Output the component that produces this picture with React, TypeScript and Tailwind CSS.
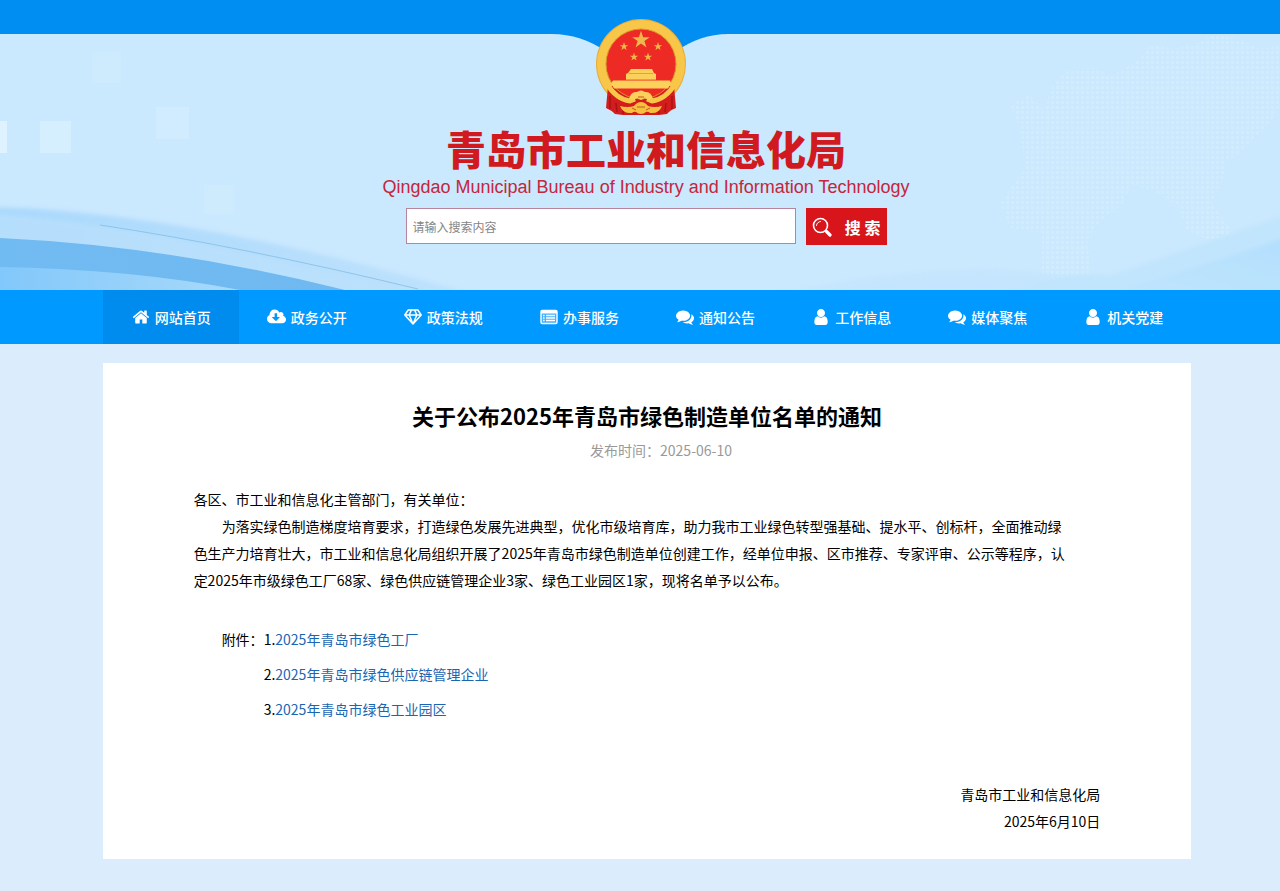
import type { ReactNode } from 'react';

interface NavItem {
  label: string;
  icon: ReactNode;
  active?: boolean;
}

const PATHS = {
  home: 'M1472 992v480q0 26-19 45t-45 19h-384v-384h-256v384h-384q-26 0-45-19t-19-45v-480q0-1 .5-3t.5-3l575-474 575 474q1 2 1 6zm223-69l-62 74q-8 9-21 11h-3q-13 0-21-7l-692-577-692 577q-12 8-24 7-13-2-21-11l-62-74q-8-10-7-23.5t11-21.5l719-599q32-26 76-26t76 26l244 204v-195q0-14 9-23t23-9h192q14 0 23 9t9 23v408l219 182q10 8 11 21.5t-7 23.5z',
  cloud: 'M1216 928q0-14-9-23t-23-9h-224v-352q0-13-9.5-22.5t-22.5-9.5h-192q-13 0-22.5 9.5t-9.5 22.5v352h-224q-13 0-22.5 9.5t-9.5 22.5q0 14 9 23l352 352q9 9 23 9t23-9l351-351q10-12 10-24zm640 224q0 159-112.5 271.5t-271.5 112.5h-1088q-185 0-316.5-131.5t-131.5-316.5q0-130 70-240t188-165q-2-30-2-43 0-212 150-362t362-150q156 0 285.5 87t188.5 231q71-62 166-62 106 0 181 75t75 181q0 76-41 138 130 31 213.5 135.5t83.5 238.5z',
  comments: 'M1408 768q0 139-94 257t-256.5 186.5-353.5 68.5q-86 0-176-16-124 88-278 128-36 9-86 16h-3q-11 0-20.5-8t-11.5-21q-1-3-1-6.5t.5-6.5 2-6l2.5-5 3.5-5.5 4-5 4.5-5 4-4.5q5-6 23-25t26-29.5 22.5-29 25-38.5 20.5-44q-124-72-195-177t-71-224q0-139 94-257t256.5-186.5 353.5-68.5 353.5 68.5 256.5 186.5 94 257zm384 256q0 120-71 224.5t-195 176.5q10 24 20.5 44t25 38.5 22.5 29 26 29.5 23 25q1 1 4 4.5t4.5 5 4 5 3.5 5.5l2.5 5 2 6 .5 6.5-1 6.5q-3 14-13 22t-22 7q-50-7-86-16-154-40-278-128-90 16-176 16-271 0-472-132 58 4 88 4 161 0 309-45t264-129q125-92 192-212t67-254q0-77-23-152 129 71 204 178t75 230z',
  user: 'M1536 1399q0 109-62.5 187t-150.5 78h-854q-88 0-150.5-78t-62.5-187q0-85 8.5-160.5t31.5-152 58.5-131 94-89 134.5-34.5q131 128 313 128t313-128q76 0 134.5 34.5t94 89 58.5 131 31.5 152 8.5 160.5zm-256-887q0 159-112.5 271.5t-271.5 112.5-271.5-112.5-112.5-271.5 112.5-271.5 271.5-112.5 271.5 112.5 112.5 271.5z',
};

const HomeIcon = () => (
  <svg viewBox="0 0 1792 1792" className="size-[18px] shrink-0" fill="currentColor"><path d={PATHS.home} /></svg>
);
const CloudIcon = () => (
  <svg viewBox="-64 0 1920 1792" className="h-[18px] w-[19px] shrink-0" fill="currentColor"><path d={PATHS.cloud} /></svg>
);
const CommentsIcon = () => (
  <svg viewBox="0 0 1792 1792" className="size-[18px] shrink-0" fill="currentColor"><path d={PATHS.comments} /></svg>
);
const UserIcon = () => (
  <svg viewBox="256 128 1280 1536" className="h-4 w-[14px] shrink-0" fill="currentColor"><path d={PATHS.user} /></svg>
);
const DiamondIcon = () => (
  <svg viewBox="0 0 18 16" className="h-4 w-[18px]" fill="none" stroke="currentColor" strokeWidth="1.5" strokeLinejoin="round">
    <path d="M4.2 1h9.6L17.2 6 9 15 .8 6zM.8 6h16.4M9 15 5.2 6 7.4 1M9 15l3.8-9-2.2-5" />
  </svg>
);
const ListIcon = () => (
  <svg viewBox="0 0 18 16" className="h-4 w-[18px]" fill="none" stroke="currentColor">
    <rect x="1" y="1.5" width="16" height="13" rx="1.2" fill="currentColor" fillOpacity=".25" strokeWidth="1.4" />
    <path d="M1 3h16" strokeWidth="3" />
    <path d="M3 6.5h1.6M6 6.5h9M3 9h1.6M6 9h9M3 11.5h1.6M6 11.5h9" strokeWidth="1.4" />
  </svg>
);

const NAV_ITEMS: NavItem[] = [
  { label: '网站首页', icon: <HomeIcon />, active: true },
  { label: '政务公开', icon: <CloudIcon /> },
  { label: '政策法规', icon: <DiamondIcon /> },
  { label: '办事服务', icon: <ListIcon /> },
  { label: '通知公告', icon: <CommentsIcon /> },
  { label: '工作信息', icon: <UserIcon /> },
  { label: '媒体聚焦', icon: <CommentsIcon /> },
  { label: '机关党建', icon: <UserIcon /> },
];

const ATTACHMENTS = [
  '2025年青岛市绿色工厂',
  '2025年青岛市绿色供应链管理企业',
  '2025年青岛市绿色工业园区',
];

const STAR = 'M0-10 2.3-3.1 9.5-3.1 3.7 1.2 5.9 8.1 0 3.8-5.9 8.1-3.7 1.2-9.5-3.1-2.3-3.1z';

function Emblem() {
  return (
    <svg viewBox="0 0 90 98" className="h-[98px] w-[90px]" role="img" aria-label="国徽">
      <circle cx="45" cy="46" r="45" fill="#e9ad3a" />
      <circle cx="45" cy="46" r="44" fill="#f8c648" />
      <path d="M12 68h66l2 22q-6 2-9 6l-8 1H27l-8-1q-4-4-9-6z" fill="#d41c1c" />
      <circle cx="45" cy="46" r="35" fill="#ee2a24" stroke="#d9952c" strokeWidth="1" />
      <path d="M14 78v13M20 85l1 9M76 78v13M70 85l-1 9M62 88l1 8M28 88l-1 8" stroke="#a81418" strokeWidth="1.5" />
      <g fill="#f0b84a">
        <path d={STAR} transform="translate(45 22) scale(.92)" />
        <path d={STAR} transform="translate(28 28.500) scale(.44)" />
        <path d={STAR} transform="translate(62 28.500) scale(.44)" />
        <path d={STAR} transform="translate(38 39) scale(.44)" />
        <path d={STAR} transform="translate(52 39) scale(.44)" />
      </g>
      <g fill="#fbd15b">
        <path d="M35 51h21l2 4 2 1v6H30v-6l2-1z" />
        <path d="M17 62.500h57l1 3-3 5H18l-3-5z" />
      </g>
      <path d="M33 55.500h24M30 61.500h30" stroke="#d89a2a" strokeWidth=".8" />
      <path d="M11 66Q20 81 34 83l5-2" fill="none" stroke="#f8c648" strokeWidth="5" />
      <path d="M79 66Q70 81 56 83l-5-2" fill="none" stroke="#f8c648" strokeWidth="5" />
      <path d="M33 81q2-8 8-7 4-3 8 0 6-1 8 7l-5 1-3-2-4 2-4-2-3 2z" fill="#fbd15b" />
      <path d="M24 88q8 2 14 0 3-4 7-4t7 4q6 2 14 0-3 8-12 7-2-2-4-1-2 2-5 2t-5-2q-2-1-4 1-9 1-12-7z" fill="#f5bf3f" />
      <path d="M36 90l4 2M54 90l-4 2M41 89h8M42 79h6" stroke="#c8571f" strokeWidth="1" />
    </svg>
  );
}

function HeaderBackdrop() {
  return (
    <svg
      viewBox="0 0 1280 290"
      preserveAspectRatio="xMidYMin slice"
      className="absolute inset-0 h-full w-full"
      aria-hidden="true"
    >
      <defs>
        <linearGradient id="band" x1="0" y1="0" x2="1" y2="0">
          <stop offset="0" stopColor="#a9d8fc" />
          <stop offset="1" stopColor="#c0e3fd" />
        </linearGradient>
        <linearGradient id="wave" x1="0" y1="0" x2="1" y2="0">
          <stop offset="0" stopColor="#70bbf2" />
          <stop offset="1" stopColor="#70b9f0" />
        </linearGradient>
        <linearGradient id="foot" x1="0" y1="0" x2="1" y2="0">
          <stop offset="0" stopColor="#82c8fa" />
          <stop offset="1" stopColor="#a9d9fb" />
        </linearGradient>
        <linearGradient id="swoosh" x1="0" y1="1" x2="1" y2="0">
          <stop offset="0" stopColor="#c2e5fd" />
          <stop offset="1" stopColor="#b2dffd" />
        </linearGradient>
        <pattern id="dots" width="5" height="5" patternUnits="userSpaceOnUse">
          <rect width="3" height="3" x="1" y="1" fill="#d6f1fc" />
        </pattern>
        <filter id="soft"><feGaussianBlur stdDeviation="2" /></filter>
      </defs>
      <rect width="1280" height="290" fill="#cae8fe" />
      <g fill="#d5effe">
        <rect x="-4" y="121" width="11" height="32" fill="#def3ff" />
        <rect x="40" y="121" width="31" height="32" />
        <rect x="156" y="107" width="33" height="32" fill="#d0ecfe" />
        <rect x="92" y="52" width="29" height="31" fill="#ceebfe" />
        <rect x="204" y="185" width="30" height="29" fill="#ceebfe" />
      </g>
      <path d="M-20 207Q180 208 500 302H-20z" fill="url(#band)" filter="url(#soft)" />
      <path d="M-20 212Q220 234 418 302H330L-20 236z" fill="#bbe1fd" filter="url(#soft)" opacity=".7" />
      <path d="M100 225Q240 246 418 289" fill="none" stroke="#83bee6" strokeWidth="1" opacity=".8" />
      <path d="M0 238Q170 246 345 290H0z" fill="url(#wave)" />
      <path d="M0 267Q130 269 240 290H0z" fill="url(#foot)" />
      <path
        d="M1010 105l20-10 15 15 5-20 15-18 30-5 15 10 30-18 10-15 25 5 20-5 20-10 25 5 20 10 25-4 15 20v50l-20-8-15 22-18 18-20 15-5 20-10 20 20 30-20 10-25-12-10-25-25-15-20-5-10 20-20 15-15 20 5 35-30 8-20-10v-40l-32-5-10-25 25-35-5-40z"
        fill="url(#dots)"
        opacity=".55"
      />
      <path d="M760 300Q960 250 1110 284L1300 282v20z" fill="#c1e4fd" filter="url(#soft)" opacity=".6" />
      <path d="M1000 300Q1060 268 1110 276L1300 210v90z" fill="#c1e5fd" filter="url(#soft)" />
      <path d="M1080 300Q1190 272 1300 232v70z" fill="url(#swoosh)" filter="url(#soft)" />
      <path d="M0 0H1280V34H728Q700 34 675 52H607Q581 34 552 34H0z" fill="#008ef3" />
    </svg>
  );
}

function Header() {
  return (
    <header className="relative bg-[#cae8fe]">
      <HeaderBackdrop />
      <div className="relative flex flex-col items-center pt-[18px] pb-[45px] pl-0.5">
        <Emblem />
        <div className="flex flex-col items-center pt-3 pl-2.5">
          <h1 className="text-[40px] leading-[40px] font-black text-[#d01a20]">青岛市工业和信息化局</h1>
          <p className="pt-1.5 font-['Liberation_Sans',sans-serif] text-[18px] leading-[26px] text-[#c4263a]">
            Qingdao Municipal Bureau of Industry and Information Technology
          </p>
          <form className="flex gap-2.5 pt-2" onSubmit={(e) => e.preventDefault()}>
            <input
              type="text"
              aria-label="搜索内容"
              placeholder="请输入搜索内容"
              className="h-9 w-[390px] border border-[#b8849c] bg-white px-1.5 text-[12px] text-[#333] placeholder:text-[#858585]"
            />
            <button type="submit" className="flex h-[37px] w-[81px] items-center justify-between bg-[#d7151b] px-1.5 text-[16px] font-bold text-white">
              <svg viewBox="0 0 20 20" className="size-5" fill="none" stroke="currentColor" strokeLinecap="round">
                <circle cx="8.500" cy="8.500" r="7" strokeWidth="1.6" />
                <path d="M4.500 8.500a4 4 0 0 1 4-4" strokeWidth="1" />
                <path d="M14.500 14.500 18 18" strokeWidth="3.2" />
              </svg>
              <span>搜 索</span>
            </button>
          </form>
        </div>
      </div>
    </header>
  );
}

function Nav() {
  return (
    <nav className="bg-[#0099ff] pl-3.5">
      <div className="mx-auto grid w-[86%] grid-cols-8">
        {NAV_ITEMS.map((item) => (
          <a
            key={item.label}
            href="#"
            className={`flex h-[54px] items-center justify-center gap-1 text-[14px] font-medium text-white ${item.active ? 'bg-[#008bee]' : ''}`}
          >
            <span className="flex w-5 justify-center">{item.icon}</span>
            <span>{item.label}</span>
          </a>
        ))}
      </div>
    </nav>
  );
}

export default function App() {
  return (
    <div className="bg-[#dbedfd] font-['Noto_Sans_CJK_SC',sans-serif] text-black">
      <Header />
      <Nav />
      <main className="pt-[19px] pb-8 pl-3.5">
        <article className="mx-auto w-[86%] bg-white px-[91px] pt-9 pb-6 text-[14px] leading-[27px]">
          <h2 className="text-center text-[22px] leading-[32px] font-bold">关于公布2025年青岛市绿色制造单位名单的通知</h2>
          <p className="pt-1.5 pl-7 text-center text-[#999]">发布时间：2025-06-10</p>

          <div className="pt-[22px]">
            <p>各区、市工业和信息化主管部门，有关单位：</p>
            <p className="indent-[2em]">
              为落实绿色制造梯度培育要求，打造绿色发展先进典型，优化市级培育库，助力我市工业绿色转型强基础、提水平、创标杆，全面推动绿
              <br />
              色生产力培育壮大，市工业和信息化局组织开展了2025年青岛市绿色制造单位创建工作，经单位申报、区市推荐、专家评审、公示等程序，认
              <br />
              定2025年市级绿色工厂68家、绿色供应链管理企业3家、绿色工业园区1家，现将名单予以公布。
            </p>
          </div>

          <div className="flex pt-7 pl-7 leading-[35px]">
            <span>附件：</span>
            <ol>
              {ATTACHMENTS.map((name, i) => (
                <li key={name}>
                  {i + 1}.
                  <a href="#" className="text-[#1a66b3]">{name}</a>
                </li>
              ))}
            </ol>
          </div>

          <div className="pt-[54px] text-right">
            <p>青岛市工业和信息化局</p>
            <p>2025年6月10日</p>
          </div>
        </article>
      </main>
    </div>
  );
}
